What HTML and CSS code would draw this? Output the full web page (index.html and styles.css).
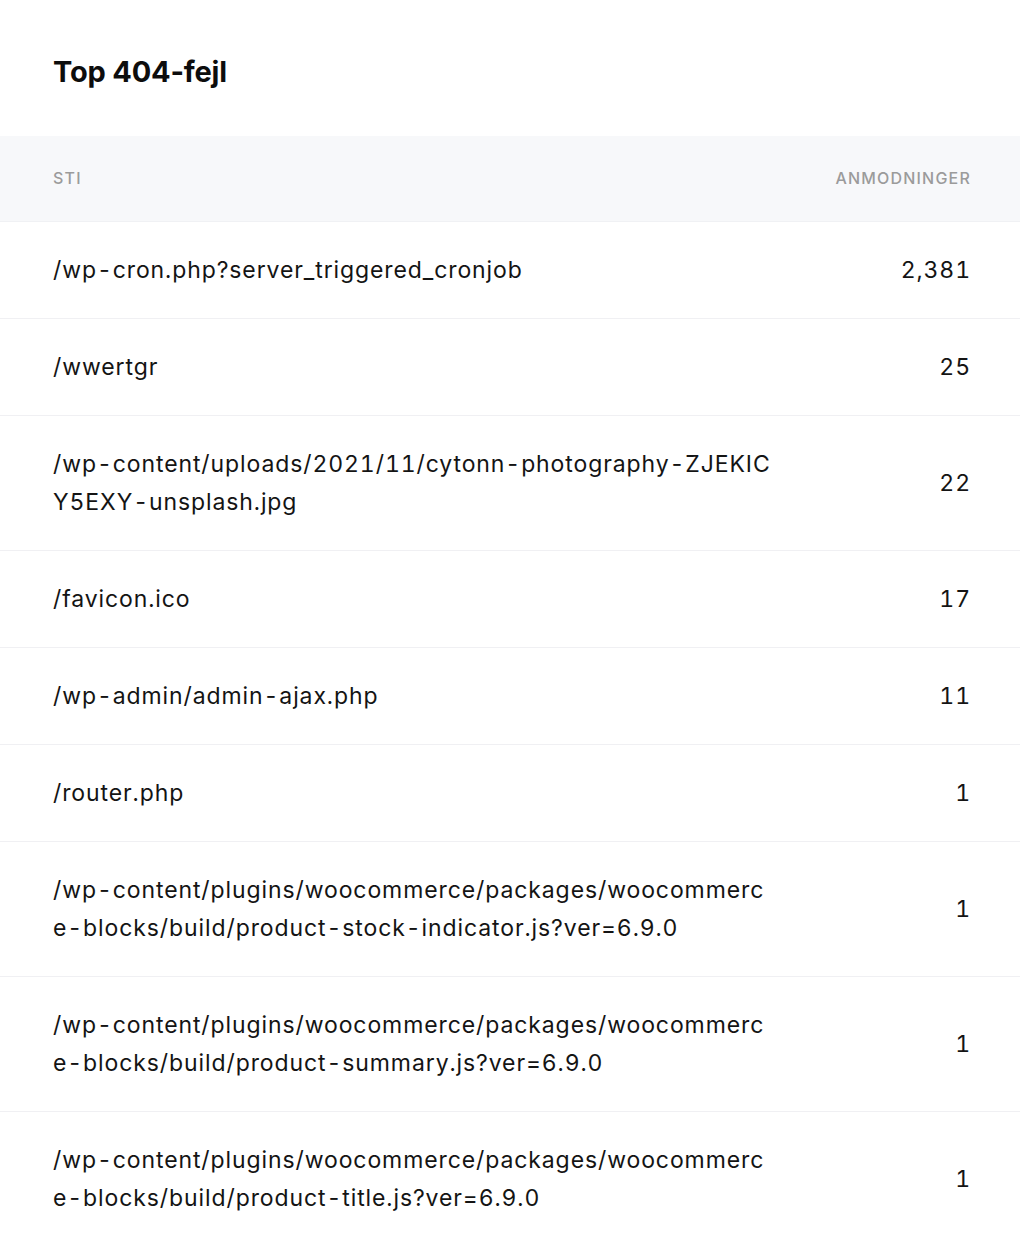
FILE: index.html
```html
<!DOCTYPE html>
<html lang="da">
<head>
<meta charset="utf-8">
<title>Top 404-fejl</title>
<link rel="stylesheet" href="styles.css">
</head>
<body>
<section class="card">
  <h2 class="title">Top 404-fejl</h2>
  <div class="table">
    <div class="row head">
      <div class="path">STI</div>
      <div class="count">ANMODNINGER</div>
    </div>
    <div class="row"><div class="path">/wp-cron.php?server_triggered_cronjob</div><div class="count">2,381</div></div>
    <div class="row"><div class="path">/wwertgr</div><div class="count">25</div></div>
    <div class="row"><div class="path">/wp-content/uploads/2021/11/cytonn-photography-ZJEKICY5EXY-unsplash.jpg</div><div class="count">22</div></div>
    <div class="row"><div class="path">/favicon.ico</div><div class="count">17</div></div>
    <div class="row"><div class="path">/wp-admin/admin-ajax.php</div><div class="count">11</div></div>
    <div class="row"><div class="path">/router.php</div><div class="count">1</div></div>
    <div class="row"><div class="path">/wp-content/plugins/woocommerce/packages/woocommerce-blocks/build/product-stock-indicator.js?ver=6.9.0</div><div class="count">1</div></div>
    <div class="row"><div class="path">/wp-content/plugins/woocommerce/packages/woocommerce-blocks/build/product-summary.js?ver=6.9.0</div><div class="count">1</div></div>
    <div class="row"><div class="path">/wp-content/plugins/woocommerce/packages/woocommerce-blocks/build/product-title.js?ver=6.9.0</div><div class="count">1</div></div>
  </div>
</section>
</body>
</html>
```
FILE: styles.css
```css
html, body {
  margin: 0;
  padding: 0;
  background: #ffffff;
}
body {
  font-family: Inter, "Noto Sans", sans-serif;
  color: #141414;
}
.card {
  width: 1020px;
}
.title {
  margin: 0;
  padding: 52px 53px 44px 53px;
  font-size: 29px;
  line-height: 40px;
  font-weight: 700;
  letter-spacing: -0.2px;
  color: #0d0d0d;
}
.table {
  display: flex;
  flex-direction: column;
}
.row {
  display: flex;
  align-items: center;
  justify-content: space-between;
  padding: 29px 50px 29px 53px;
  border-bottom: 1px solid #f0f0f3;
  font-size: 23px;
  line-height: 38px;
  letter-spacing: 0.9px;
  font-variant-numeric: tabular-nums;
}
.row.head {
  background: #f7f8fa;
  border-bottom: 1px solid #f0f1f4;
  padding-top: 24px;
  padding-bottom: 24px;
  font-size: 16px;
  line-height: 37px;
  font-weight: 500;
  color: #9b9b9b;
  letter-spacing: 1.2px;
}
.path {
  width: 721px;
  word-break: break-all;
}
.count {
  text-align: right;
  margin-right: -1px;
}
```
